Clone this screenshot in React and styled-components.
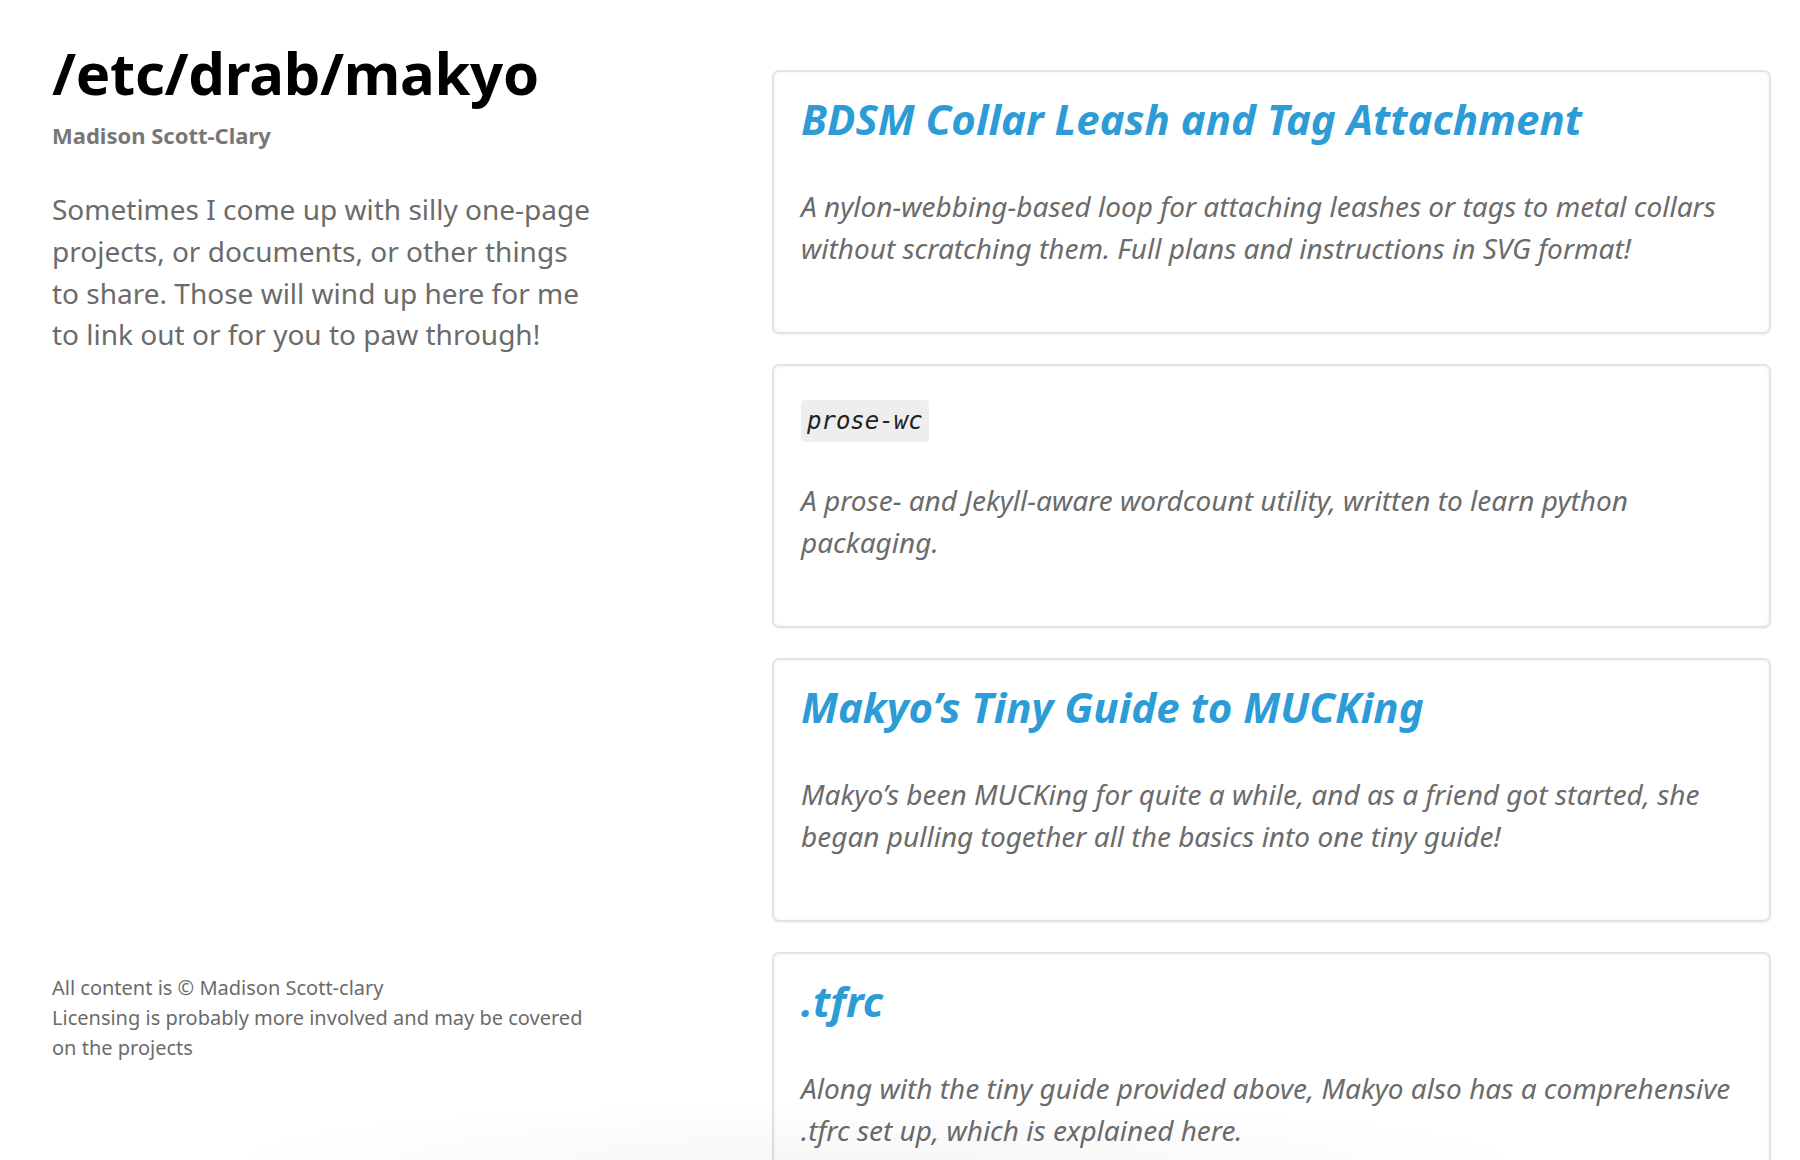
import React from "react";
import styled, { createGlobalStyle } from "styled-components";

const Global = createGlobalStyle`
  html, body { margin: 0; padding: 0; background: #fff; }
  body { font-family: "Noto Sans", "Open Sans", sans-serif; color: #6b6b6b; }
  * { box-sizing: border-box; }
`;

const Page = styled.div`
  display: grid;
  grid-template-columns: 540px 1fr;
  column-gap: 180px;
  padding: 0 29px 0 52px;
  height: 1160px;
  overflow: hidden;
  position: relative;
`;

const Aside = styled.aside`
  display: flex;
  flex-direction: column;
  height: 1160px;
  padding: 33px 0 97px;
`;

const SiteTitle = styled.h1`
  margin: 0;
  font-size: 58px;
  line-height: 80px;
  font-weight: 700;
  color: #000;
  letter-spacing: -0.3px;
`;

const Author = styled.div`
  font-size: 22px;
  font-weight: 700;
  color: #777;
  line-height: 30px;
  margin-top: 7px;
`;

const Intro = styled.p`
  margin: 39px 0 0;
  font-size: 28px;
  line-height: 41.8px;
  color: #6b6b6b;
`;

const Footer = styled.footer`
  margin-top: auto;
  font-size: 20px;
  line-height: 30px;
  color: #6b6b6b;
`;

const Feed = styled.main`
  display: flex;
  flex-direction: column;
  gap: 30px;
  padding-top: 70px;
`;

const Card = styled.article`
  height: 264px;
  flex-shrink: 0;
  border: 2px solid #e4e4e4;
  border-radius: 7px;
  box-shadow: inset 0 0 4px rgba(0, 0, 0, 0.05), 0 1px 2px rgba(0, 0, 0, 0.06);
  padding: 18px 27px;
  background: #fff;
`;

const CardTitle = styled.h2`
  margin: 0;
  font-size: 42px;
  line-height: 58px;
  font-weight: 700;
  font-style: italic;
  color: #2d9bd6;
`;

const Code = styled.code`
  display: inline-block;
  font-family: "DejaVu Sans Mono", "Liberation Mono", monospace;
  font-size: 24px;
  line-height: 34px;
  font-weight: 400;
  font-style: italic;
  color: #222;
  background: #eee;
  border-radius: 4px;
  padding: 4px 6px;
  margin-top: 16px;
  margin-bottom: -8px;
  vertical-align: top;
`;

const Desc = styled.p`
  margin: 38px 0 0;
  font-size: 28px;
  line-height: 41.8px;
  font-style: italic;
  color: #6b6b6b;
`;

const Fade = styled.div`
  position: absolute;
  left: 200px;
  right: 250px;
  bottom: -60px;
  height: 120px;
  background: radial-gradient(ellipse at center, rgba(0, 0, 0, 0.035), rgba(0, 0, 0, 0) 70%);
  pointer-events: none;
`;

const projects = [
  {
    title: "BDSM Collar Leash and Tag Attachment",
    desc: "A nylon-webbing-based loop for attaching leashes or tags to metal collars without scratching them. Full plans and instructions in SVG format!",
  },
  {
    code: "prose-wc",
    desc: "A prose- and Jekyll-aware wordcount utility, written to learn python packaging.",
  },
  {
    title: "Makyo’s Tiny Guide to MUCKing",
    desc: "Makyo’s been MUCKing for quite a while, and as a friend got started, she began pulling together all the basics into one tiny guide!",
  },
  {
    title: ".tfrc",
    desc: "Along with the tiny guide provided above, Makyo also has a comprehensive .tfrc set up, which is explained here.",
  },
];

export default function App() {
  return (
    <>
      <Global />
      <Page>
        <Aside>
          <SiteTitle>/etc/drab/makyo</SiteTitle>
          <Author>Madison Scott-Clary</Author>
          <Intro>
            Sometimes I come up with silly one-page projects, or documents, or other things to share. Those will wind up here for me to link out or for you to paw through!
          </Intro>
          <Footer>
            All content is © Madison Scott-clary
            <br />
            Licensing is probably more involved and may be covered on the projects
          </Footer>
        </Aside>
        <Feed>
          {projects.map((p, i) => (
            <Card key={i}>
              <CardTitle>{p.code ? <Code>{p.code}</Code> : p.title}</CardTitle>
              <Desc>{p.desc}</Desc>
            </Card>
          ))}
        </Feed>
        <Fade />
      </Page>
    </>
  );
}
